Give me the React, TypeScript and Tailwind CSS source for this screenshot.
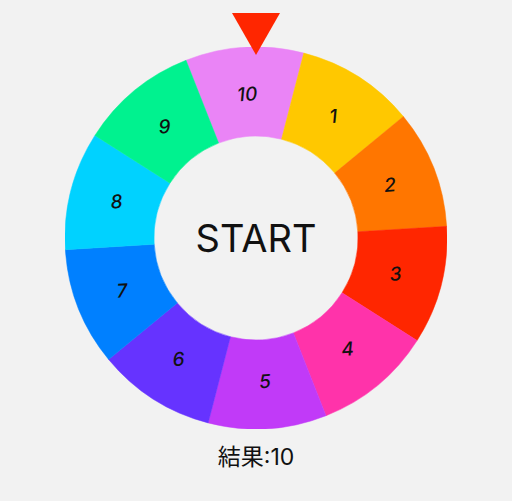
import React from "react";

const segments = [
  { label: "10", color: "#ea84f6" },
  { label: "1", color: "#ffc800" },
  { label: "2", color: "#ff7600" },
  { label: "3", color: "#ff2600" },
  { label: "4", color: "#ff33aa" },
  { label: "5", color: "#c13af8" },
  { label: "6", color: "#6633ff" },
  { label: "7", color: "#0080ff" },
  { label: "8", color: "#00d2ff" },
  { label: "9", color: "#00f28f" },
];

const SIZE = 382;
const C = SIZE / 2;
const R_OUT = 191;
const R_IN = 102;
const OFFSET = -21.5;

function point(r: number, deg: number) {
  const rad = ((deg - 90) * Math.PI) / 180;
  return [C + r * Math.cos(rad), C + r * Math.sin(rad)];
}

function arcPath(start: number, end: number) {
  const [x1, y1] = point(R_OUT, start);
  const [x2, y2] = point(R_OUT, end);
  const [x3, y3] = point(R_IN, end);
  const [x4, y4] = point(R_IN, start);
  return `M${x1} ${y1} A${R_OUT} ${R_OUT} 0 0 1 ${x2} ${y2} L${x3} ${y3} A${R_IN} ${R_IN} 0 0 0 ${x4} ${y4} Z`;
}

function Wheel() {
  return (
    <svg width={SIZE} height={SIZE} viewBox={`0 0 ${SIZE} ${SIZE}`}>
      {segments.map((s, i) => {
        const start = OFFSET + i * 36;
        const end = start + 36;
        const mid = start + 18;
        const [lx, ly] = point(144, mid);
        return (
          <g key={s.label}>
            <path d={arcPath(start, end)} fill={s.color} stroke={s.color} strokeWidth={0.5} />
            <text
              x={lx}
              y={ly}
              textAnchor="middle"
              dominantBaseline="central"
              transform={`rotate(-4 ${lx} ${ly})`}
              fontSize={19}
              fontWeight={500}
              fontStyle="italic"
              fill="#111"
              style={{ fontFamily: "Inter, 'Noto Sans', sans-serif" }}
            >
              {s.label}
            </text>
          </g>
        );
      })}
    </svg>
  );
}

export default function App() {
  return (
    <div className="w-[512px] h-[501px] bg-[#f2f2f2] flex flex-col items-center font-['Inter','Noto_Sans_CJK_JP',sans-serif] text-[#111]">
      <div className="relative mt-[47px] w-[382px] h-[382px]">
        <Wheel />
        <div className="absolute inset-0 flex items-center justify-center">
          <span className="text-[38px] leading-none">START</span>
        </div>
        <svg className="absolute left-[167px] top-[-34px]" width="48" height="42" viewBox="0 0 48 42">
          <polygon points="0,0 48,0 24,42" fill="#ff2600" />
        </svg>
      </div>
      <div className="mt-[13px] text-[23px] leading-[30px]">結果:10</div>
    </div>
  );
}
